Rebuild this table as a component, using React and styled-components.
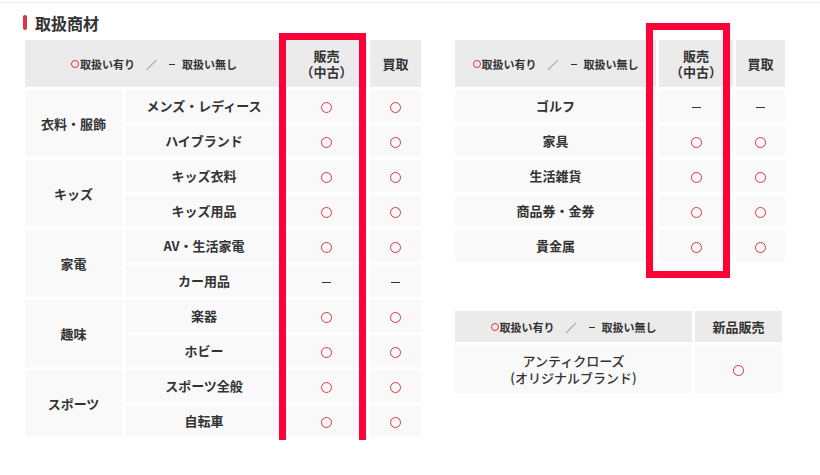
import styled, { createGlobalStyle } from 'styled-components';

const GlobalStyle = createGlobalStyle`
  body {
    margin: 0;
    background: #fff;
    font-family: "Noto Sans CJK JP", "Noto Sans", sans-serif;
    color: #333;
  }
`;

const Page = styled.div`
  margin-top: 2px;
  border-top: 1px solid #eeeeee;
  padding: 0 0 0 22px;
`;

const Title = styled.h2`
  display: flex;
  align-items: center;
  margin: 0;
  padding: 8px 0 0 1px;
  height: 23px;
  font-size: 16px;
  font-weight: 700;
  color: #333;
  line-height: 1;

  &::before {
    content: "";
    display: block;
    width: 4px;
    height: 15px;
    margin-right: 8px;
    border-radius: 2px;
    background-color: #e03345;
  }
`;

const Columns = styled.div`
  display: flex;
  align-items: flex-start;
  gap: 28px;
  margin-top: 3px;
`;

const Side = styled.div`
  display: flex;
  flex-direction: column;
  gap: 43px;
`;

const TableWrap = styled.div`
  position: relative;
`;

const Highlight = styled.div`
  position: absolute;
  left: ${(p) => p.$left}px;
  top: ${(p) => p.$top}px;
  width: ${(p) => p.$width}px;
  height: ${(p) => p.$height}px;
  box-sizing: border-box;
  border: 7px solid #ff0038;
  pointer-events: none;
`;

const Table = styled.table`
  border-collapse: separate;
  border-spacing: 3px;
  table-layout: fixed;
  width: ${(p) => p.$width}px;
`;

const Th = styled.th`
  height: ${(p) => p.$height || 47}px;
  padding: 0;
  background-color: #ebebeb;
  font-size: 13px;
  font-weight: 700;
  line-height: 16px;
  color: #333;
  text-align: center;
  vertical-align: middle;
`;

const Legend = styled.span`
  display: inline-flex;
  align-items: center;
  font-size: 11px;
  font-weight: 700;
  color: #333;
  white-space: nowrap;
`;

const Sep = styled.span`
  margin: 0 12px 0 11px;
  font-size: 11px;
  font-weight: 400;
  color: #333;
`;

const Td = styled.td`
  height: ${(p) => p.$height || 32}px;
  padding: 0;
  background-color: #f9f9f9;
  font-size: 13px;
  font-weight: ${(p) => (p.$light ? 500 : 700)};
  line-height: ${(p) => (p.$light ? 17 : 16)}px;
  color: #333;
  text-align: center;
  vertical-align: middle;
`;

const Circle = styled.span`
  display: inline-block;
  box-sizing: border-box;
  width: ${(p) => p.$size}px;
  height: ${(p) => p.$size}px;
  margin-right: ${(p) => p.$gap || 0}px;
  border: 1px solid #e2343f;
  border-radius: 50%;
  vertical-align: middle;
`;

const Dash = styled.span`
  display: inline-block;
  width: ${(p) => p.$width || 9}px;
  height: 1px;
  margin-right: ${(p) => p.$gap || 0}px;
  background-color: #333;
  vertical-align: middle;
`;

function Mark({ value }) {
  if (value === 'o') return <Circle $size={11} />;
  return <Dash />;
}

function LegendText() {
  return (
    <Legend>
      <Circle $size={8} $gap={1} />
      取扱い有り
      <Sep>／</Sep>
      <Dash $width={6} $gap={7} />
      取扱い無し
    </Legend>
  );
}

const leftRows = [
  { cat: '衣料・服飾', items: [['メンズ・レディース', 'o', 'o'], ['ハイブランド', 'o', 'o']] },
  { cat: 'キッズ', items: [['キッズ衣料', 'o', 'o'], ['キッズ用品', 'o', 'o']] },
  { cat: '家電', items: [['AV・生活家電', 'o', 'o'], ['カー用品', '-', '-']] },
  { cat: '趣味', items: [['楽器', 'o', 'o'], ['ホビー', 'o', 'o']] },
  { cat: 'スポーツ', items: [['スポーツ全般', 'o', 'o'], ['自転車', 'o', 'o']] },
];

const rightRows = [
  ['ゴルフ', '-', '-'],
  ['家具', 'o', 'o'],
  ['生活雑貨', 'o', 'o'],
  ['商品券・金券', 'o', 'o'],
  ['貴金属', 'o', 'o'],
];

function App() {
  return (
    <>
      <GlobalStyle />
      <Page>
        <Title>取扱商材</Title>
        <Columns>
          <TableWrap>
            <Table $width={402}>
              <colgroup>
                <col style={{ width: 97 }} />
                <col style={{ width: 158 }} />
                <col style={{ width: 81 }} />
                <col style={{ width: 51 }} />
              </colgroup>
              <thead>
                <tr>
                  <Th colSpan={2}>
                    <LegendText />
                  </Th>
                  <Th>
                    販売
                    <br />
                    （中古）
                  </Th>
                  <Th>買取</Th>
                </tr>
              </thead>
              <tbody>
                {leftRows.map((group) =>
                  group.items.map((item, i) => (
                    <tr key={item[0]}>
                      {i === 0 && <Td rowSpan={2}>{group.cat}</Td>}
                      <Td>{item[0]}</Td>
                      <Td>
                        <Mark value={item[1]} />
                      </Td>
                      <Td>
                        <Mark value={item[2]} />
                      </Td>
                    </tr>
                  ))
                )}
              </tbody>
            </Table>
            <Highlight $left={257} $top={-4} $width={87} $height={415} />
          </TableWrap>

          <Side>
            <TableWrap>
              <Table $width={333}>
                <colgroup>
                  <col style={{ width: 201 }} />
                  <col style={{ width: 74 }} />
                  <col style={{ width: 49 }} />
                </colgroup>
                <thead>
                  <tr>
                    <Th>
                      <LegendText />
                    </Th>
                    <Th>
                      販売
                      <br />
                      （中古）
                    </Th>
                    <Th>買取</Th>
                  </tr>
                </thead>
                <tbody>
                  {rightRows.map((row) => (
                    <tr key={row[0]}>
                      <Td>{row[0]}</Td>
                      <Td>
                        <Mark value={row[1]} />
                      </Td>
                      <Td>
                        <Mark value={row[2]} />
                      </Td>
                    </tr>
                  ))}
                </tbody>
              </Table>
              <Highlight $left={194} $top={-14} $width={84} $height={255} />
            </TableWrap>

            <Table $width={333}>
              <colgroup>
                <col style={{ width: 237 }} />
                <col style={{ width: 87 }} />
              </colgroup>
              <thead>
                <tr>
                  <Th $height={31}>
                    <LegendText />
                  </Th>
                  <Th $height={31}>新品販売</Th>
                </tr>
              </thead>
              <tbody>
                <tr>
                  <Td $height={48} $light>
                    アンティクローズ
                    <br />
                    (オリジナルブランド)
                  </Td>
                  <Td $height={48}>
                    <Mark value="o" />
                  </Td>
                </tr>
              </tbody>
            </Table>
          </Side>
        </Columns>
      </Page>
    </>
  );
}

export default App;
